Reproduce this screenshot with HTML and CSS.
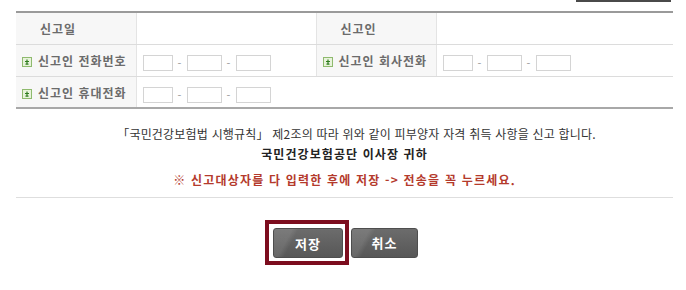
FILE: index.html
```html
<!DOCTYPE html>
<html lang="ko">
<head>
    <meta charset="UTF-8">
    <title>피부양자 자격 취득 신고</title>
    <link rel="stylesheet" href="styles.css">
</head>
<body>
    <div class="wrap">
        <div class="top-tools"><span class="cut-btn"></span></div>

        <table class="form-table">
            <colgroup>
                <col style="width:120px">
                <col style="width:180px">
                <col style="width:120px">
                <col style="width:237px">
            </colgroup>
            <tr>
                <th class="plain">신고일</th>
                <td></td>
                <th class="plain">신고인</th>
                <td></td>
            </tr>
            <tr>
                <th><svg class="req" width="10" height="10" viewBox="0 0 10 10"><rect x="0.5" y="0.5" width="9" height="9" fill="#e8f3dc" stroke="#8fba6e"/><path d="M5 2.5v4M3 4.5h4M3.5 7.2h3" stroke="#2f7d1f" stroke-width="1.2"/></svg>신고인 전화번호</th>
                <td>
                    <input type="text" class="tel tel-a"><span class="dash">-</span><input type="text" class="tel"><span class="dash">-</span><input type="text" class="tel">
                </td>
                <th><svg class="req" width="10" height="10" viewBox="0 0 10 10"><rect x="0.5" y="0.5" width="9" height="9" fill="#e8f3dc" stroke="#8fba6e"/><path d="M5 2.5v4M3 4.5h4M3.5 7.2h3" stroke="#2f7d1f" stroke-width="1.2"/></svg>신고인 회사전화</th>
                <td>
                    <input type="text" class="tel tel-a"><span class="dash">-</span><input type="text" class="tel"><span class="dash">-</span><input type="text" class="tel">
                </td>
            </tr>
            <tr class="last">
                <th><svg class="req" width="10" height="10" viewBox="0 0 10 10"><rect x="0.5" y="0.5" width="9" height="9" fill="#e8f3dc" stroke="#8fba6e"/><path d="M5 2.5v4M3 4.5h4M3.5 7.2h3" stroke="#2f7d1f" stroke-width="1.2"/></svg>신고인 휴대전화</th>
                <td colspan="3">
                    <input type="text" class="tel tel-a"><span class="dash">-</span><input type="text" class="tel"><span class="dash">-</span><input type="text" class="tel">
                </td>
            </tr>
        </table>

        <div class="notice">
            <p class="law">「국민건강보험법 시행규칙」 제2조의 따라 위와 같이 피부양자 자격 취득 사항을 신고 합니다.</p>
            <p class="to">국민건강보험공단 이사장 귀하</p>
            <p class="warn">※ 신고대상자를 다 입력한 후에 저장 -&gt; 전송을 꼭 누르세요.</p>
        </div>

        <div class="btn-area">
            <span class="focus-box"><button class="btn">저장</button></span>
            <button class="btn">취소</button>
        </div>
    </div>
</body>
</html>
```

FILE: styles.css
```css
body {
    margin: 0;
    background: #fff;
    font-family: "Noto Sans CJK KR", "Liberation Sans", sans-serif;
    color: #333;
}

.wrap {
    width: 657px;
    padding-left: 16px;
}

.top-tools {
    height: 11px;
    display: flex;
    justify-content: flex-end;
}

.cut-btn {
    display: block;
    width: 95px;
    height: 2px;
    margin-right: 2px;
    background: #4a4a4a;
}

.form-table {
    width: 657px;
    border-collapse: collapse;
    table-layout: fixed;
    border-top: 2px solid #9a9a9a;
    border-bottom: 2px solid #a8a8a8;
}

.form-table th,
.form-table td {
    height: 31px;
    padding: 0;
    border-bottom: 1px solid #dcdcdc;
    border-left: 1px solid #e4e4e4;
}

.form-table tr.last th,
.form-table tr.last td {
    border-bottom: none;
    height: 30px;
}

.form-table th:first-child {
    border-left: none;
}

.form-table th {
    background: #f7f7f7;
    color: #6b6b6b;
    font-size: 12px;
    font-weight: bold;
    text-align: left;
    padding-left: 6px;
    letter-spacing: 1px;
    white-space: nowrap;
}

.form-table th.plain {
    padding-left: 24px;
}

.req {
    display: inline-block;
    margin-right: 6px;
    vertical-align: -1px;
}

.form-table td {
    padding-left: 6px;
}

.tel {
    box-sizing: border-box;
    width: 35px;
    height: 16px;
    margin: 0;
    padding: 0 2px;
    border: 1px solid #d4d4d4;
    vertical-align: middle;
    font-size: 11px;
}

.tel-a {
    width: 30px;
}

.dash {
    display: inline-block;
    width: 14px;
    text-align: center;
    color: #999;
    font-size: 11px;
    vertical-align: middle;
}

.notice {
    text-align: center;
    padding-top: 15px;
    padding-bottom: 6px;
    border-bottom: 1px solid #dedede;
}

.notice p {
    margin: 0;
}

.law {
    padding-left: 24px;
    font-size: 12px;
    line-height: 20px;
    letter-spacing: 0.2px;
    color: #333;
}

.to {
    font-size: 12px;
    font-weight: bold;
    line-height: 19px;
    letter-spacing: 1.1px;
    color: #222;
}

.warn {
    margin-top: 6px !important;
    font-size: 12px;
    font-weight: bold;
    line-height: 22px;
    letter-spacing: 1.2px;
    color: #b43a2c;
}

.btn-area {
    display: flex;
    justify-content: center;
    align-items: center;
    padding-top: 22px;
    padding-right: 6px;
}

.focus-box {
    display: inline-flex;
    padding: 4px 2px 3px 4px;
    border: 4px solid #7c0d1e;
}

.btn {
    width: 70px;
    height: 30px;
    border: 1px solid #4e4e4e;
    border-radius: 3px;
    background:
        linear-gradient(118deg, rgba(255,255,255,0.10) 0 22%, transparent 30%),
        linear-gradient(#6c6c6c, #575757);
    color: #fff;
    font-family: "Noto Sans CJK KR", sans-serif;
    font-size: 13px;
    font-weight: bold;
    letter-spacing: 1px;
    cursor: pointer;
}

.btn-area > .btn {
    width: 67px;
    margin-left: 2px;
}
```
